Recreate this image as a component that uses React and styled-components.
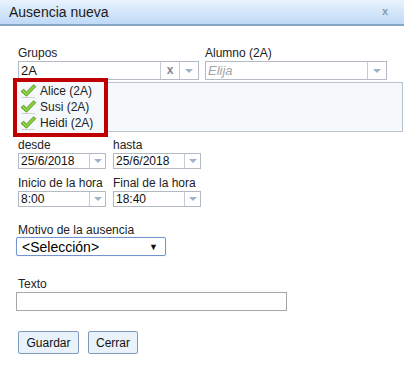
import React from 'react';
import styled, { createGlobalStyle } from 'styled-components';

const Global = createGlobalStyle`
  *, *::before, *::after { box-sizing: border-box; }
  html, body { margin: 0; padding: 0; background: #fff; }
  body { font-family: "Liberation Sans", Arial, sans-serif; color: #222; }
`;

const Dialog = styled.div`
  width: 404px;
  height: 374px;
  background: #fff;
  overflow: hidden;
`;

const TitleBar = styled.div`
  height: 26px;
  display: flex;
  align-items: center;
  justify-content: space-between;
  padding: 0 16px 0 9px;
  background: linear-gradient(#e9f3fd, #bfd9f7);
  border-bottom: 2px solid #86a6c6;
  font-size: 14px;
  color: #1a1a1a;
`;

const Close = styled.span`
  font-size: 11px;
  font-weight: bold;
  color: #8c9bb0;
  margin-top: -2px;
`;

const Body = styled.div`
  padding: 20px 0 0 18px;
  display: flex;
  flex-direction: column;
`;

const Row = styled.div`
  display: flex;
  gap: ${(p) => p.$gap || 6}px;
  margin-top: ${(p) => p.$top || 0}px;
`;

const Field = styled.div`
  display: flex;
  flex-direction: column;
  width: ${(p) => p.$w}px;
`;

const Label = styled.label`
  font-size: 12px;
  line-height: 14px;
  color: #222;
  height: ${(p) => p.$h || 15}px;
`;

const Combo = styled.div`
  display: flex;
  height: ${(p) => p.$h || 19}px;
  border: 1px solid #b3bac4;
  background: #fff;
`;

const ComboText = styled.div`
  flex: 1;
  display: flex;
  align-items: center;
  padding-left: 2px;
  font-size: ${(p) => p.$size || 13}px;
  color: ${(p) => (p.$placeholder ? '#a3a3a3' : '#111')};
  font-style: ${(p) => (p.$placeholder ? 'italic' : 'normal')};
`;

const Cell = styled.div`
  width: ${(p) => p.$w || 19}px;
  border-left: 1px solid #c6ccd4;
  display: flex;
  align-items: center;
  justify-content: center;
  background: #fff;
`;

const Arrow = styled.span`
  width: 0;
  height: 0;
  border-left: 4px solid transparent;
  border-right: 4px solid transparent;
  border-top: 4px solid #9fb0c8;
`;

const ClearX = styled.span`
  font-size: 12px;
  font-weight: bold;
  color: #7f8996;
  margin-top: -2px;
`;

const ListWrap = styled.div`
  position: relative;
  margin-top: 2px;
  height: 50px;
  width: 385px;
  border: 1px solid #b9c3cf;
  background: #f6f9fc;
`;

const Highlight = styled.div`
  position: absolute;
  left: -6px;
  top: -5px;
  width: 95px;
  height: 59px;
  border: 4px solid #c00000;
  padding: 1px 0 0 3px;
  background: #f6f9fc;
`;

const Item = styled.div`
  display: flex;
  align-items: center;
  gap: 3px;
  height: 16px;
  font-size: 12px;
  color: #222;
`;

const Select = styled.div`
  width: 150px;
  height: 19px;
  border: 1px solid #7395cf;
  border-radius: 2px;
  margin-left: -2px;
  display: flex;
  align-items: center;
  justify-content: space-between;
  padding: 0 7px 0 5px;
  font-size: 14px;
  color: #000;
  box-shadow: 0 0 1px #9db8e6;
`;

const Caret = styled.span`
  font-size: 9px;
  color: #111;
`;

const TextInput = styled.div`
  margin-left: -2px;
  width: 271px;
  height: 19px;
  border: 1px solid #a7a7a7;
`;

const Buttons = styled.div`
  display: flex;
  gap: 9px;
  margin-top: 20px;
`;

const Button = styled.button`
  height: 23px;
  width: ${(p) => p.$w}px;
  padding: 0;
  font-family: "Liberation Sans", Arial, sans-serif;
  font-size: 12px;
  color: #111;
  background: #e9f1fa;
  border: 1px solid #7f9cbc;
  border-radius: 2px;
`;

function Check() {
  return (
    <svg width="17" height="14" viewBox="0 0 17 14">
      <path d="M2 13.5 L15 13.5" stroke="#cfcfcf" strokeWidth="1" />
      <path
        d="M1 7.5 L3.8 5.2 L6.4 8.2 L13.6 0.8 L15.8 2.6 L6.5 12.2 Z"
        fill="#8fd03a"
        stroke="#4f8f1e"
        strokeWidth="0.9"
        strokeLinejoin="round"
      />
    </svg>
  );
}

function DropField({ label, value, w }) {
  return (
    <Field $w={w}>
      <Label>{label}</Label>
      <Combo $h={16}>
        <ComboText $size={12}>{value}</ComboText>
        <Cell $w={16}>
          <Arrow />
        </Cell>
      </Combo>
    </Field>
  );
}

export default function App() {
  return (
    <Dialog>
      <Global />
      <TitleBar>
        <span>Ausencia nueva</span>
        <Close>x</Close>
      </TitleBar>
      <Body>
        <Row>
          <Field $w={181}>
            <Label>Grupos</Label>
            <Combo>
              <ComboText>2A</ComboText>
              <Cell>
                <ClearX>x</ClearX>
              </Cell>
              <Cell>
                <Arrow />
              </Cell>
            </Combo>
          </Field>
          <Field $w={182}>
            <Label>Alumno (2A)</Label>
            <Combo>
              <ComboText $placeholder>Elija</ComboText>
              <Cell>
                <Arrow />
              </Cell>
            </Combo>
          </Field>
        </Row>
        <ListWrap>
          <Highlight>
            {['Alice (2A)', 'Susi (2A)', 'Heidi (2A)'].map((n) => (
              <Item key={n}>
                <Check />
                {n}
              </Item>
            ))}
          </Highlight>
        </ListWrap>
        <Row $top={6} $gap={7}>
          <DropField label="desde" value="25/6/2018" w={88} />
          <DropField label="hasta" value="25/6/2018" w={88} />
        </Row>
        <Row $top={7} $gap={7}>
          <DropField label="Inicio de la hora" value="8:00" w={88} />
          <DropField label="Final de la hora" value="18:40" w={88} />
        </Row>
        <Row $top={16}>
          <Field>
            <Label $h={14}>Motivo de la ausencia</Label>
            <Select>
              <span>&lt;Selección&gt;</span>
              <Caret>▼</Caret>
            </Select>
          </Field>
        </Row>
        <Row $top={21}>
          <Field>
            <Label>Texto</Label>
            <TextInput />
          </Field>
        </Row>
        <Buttons>
          <Button $w={61}>Guardar</Button>
          <Button $w={50}>Cerrar</Button>
        </Buttons>
      </Body>
    </Dialog>
  );
}
